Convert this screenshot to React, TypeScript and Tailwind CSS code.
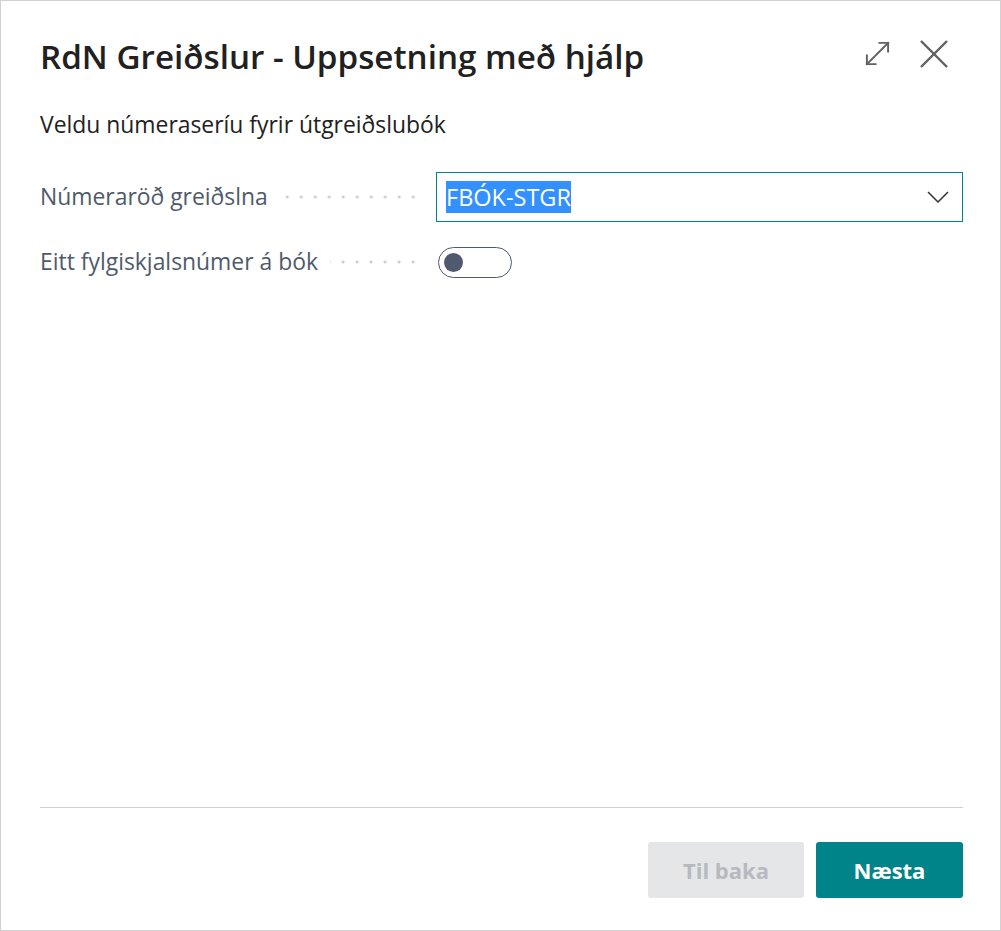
import { useState } from "react";

function ExpandIcon() {
  return (
    <svg width="27" height="27" viewBox="0 0 28 28" fill="none" stroke="#616161" strokeWidth="2" strokeLinecap="square" aria-hidden="true">
      <line x1="3" y1="25" x2="25" y2="3" />
      <polyline points="16,3 25,3 25,12" />
      <polyline points="3,16 3,25 12,25" />
    </svg>
  );
}

function CloseIcon() {
  return (
    <svg width="28" height="28" viewBox="0 0 28 28" fill="none" stroke="#616161" strokeWidth="2.4" aria-hidden="true">
      <line x1="1" y1="1" x2="27" y2="27" />
      <line x1="27" y1="1" x2="1" y2="27" />
    </svg>
  );
}

function Chevron() {
  return (
    <svg width="22" height="12" viewBox="0 0 22 12" fill="none" stroke="#333333" strokeWidth="1.5" aria-hidden="true">
      <polyline points="1,1 11,11 21,1" />
    </svg>
  );
}

function Label({ text }: { text: string }) {
  return (
    <div className="flex items-center w-[380px] shrink-0">
      <span className="text-[22.9px] text-[#4f5a6a] whitespace-nowrap">{text}</span>
      <span className="flex-1 ml-[12px] h-[6px] bg-[radial-gradient(circle,#cfcfcf_1.3px,transparent_1.8px)] bg-[length:14px_6px] bg-repeat-x bg-right" />
    </div>
  );
}

export default function App() {
  const [on, setOn] = useState(false);

  return (
    <div className="w-[1001px] h-[931px] bg-white border border-[#d2d2d2] flex flex-col pl-[39px] pr-[37px] font-['Open_Sans',sans-serif] text-[#212121]">
      {/* Header */}
      <div className="flex items-center justify-between pt-[34px]">
        <h1 className="text-[33.2px] font-semibold leading-[44px]">RdN Greiðslur - Uppsetning með hjálp</h1>
        <div className="flex items-center gap-[29px] mr-[15px] mb-[7px]">
          <button aria-label="Stækka"><ExpandIcon /></button>
          <button aria-label="Loka"><CloseIcon /></button>
        </div>
      </div>

      <p className="mt-[31px] text-[22.9px] leading-[30px]">Veldu númeraseríu fyrir útgreiðslubók</p>

      {/* Fields */}
      <div className="mt-[32px] flex flex-col gap-[15px]">
        <div className="flex items-center gap-[16px] h-[50px]">
          <Label text="Númeraröð greiðslna" />
          <div className="flex-1 h-[50px] border border-[#008489] flex items-center pl-[9px] pr-[13px]">
            <span className="flex-1 text-[23.5px] leading-[32px]">
              <span className="bg-[#3390ff] text-white">FBÓK-STGR</span>
            </span>
            <Chevron />
          </div>
        </div>
        <div className="flex items-center gap-[16px] h-[50px]">
          <Label text="Eitt fylgiskjalsnúmer á bók" />
          <button
            onClick={() => setOn((v) => !v)}
            aria-pressed={on}
            className="ml-[2px] w-[74px] h-[31px] rounded-full border border-[#4f5a6e] flex items-center px-[5px]"
          >
            <span className="w-[19px] h-[19px] rounded-full bg-[#4f5a6e]" />
          </button>
        </div>
      </div>

      <div className="flex-1" />

      {/* Footer */}
      <div className="border-t border-[#d0d0d0] pt-[34px] pb-[32px] flex justify-end gap-[12px]">
        <button disabled className="w-[156px] h-[56px] rounded-[3px] bg-[#e5e6e8] text-[#b6babf] text-[22px] font-bold">Til baka</button>
        <button className="w-[147px] h-[56px] rounded-[3px] bg-[#008489] text-white text-[22px] font-bold">Næsta</button>
      </div>
    </div>
  );
}
